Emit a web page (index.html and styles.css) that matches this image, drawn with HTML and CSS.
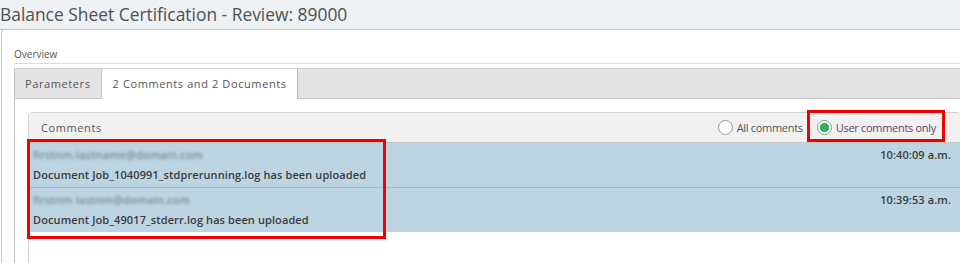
FILE: index.html
```html
<!DOCTYPE html>
<html lang="en">
<head>
    <meta charset="UTF-8">
    <title>Balance Sheet Certification - Review: 89000</title>
    <link rel="stylesheet" href="styles.css">
</head>
<body>
    <header class="page-title">Balance Sheet Certification - Review: 89000</header>

    <div class="card">
        <div class="overview">Overview</div>

        <div class="tabs">
            <div class="tab">Parameters</div>
            <div class="tab active">2 Comments and 2 Documents</div>
        </div>

        <div class="tab-body">
            <div class="panel">
                <div class="panel-header">
                    <span class="panel-title">Comments</span>
                    <div class="filters">
                        <label class="radio"><span class="dot"></span>All comments</label>
                        <label class="radio checked"><span class="dot"></span>User comments only</label>
                    </div>
                </div>

                <div class="comment">
                    <div class="comment-top">
                        <span class="author">firstnm.lastname@domain.com</span>
                        <span class="time">10:40:09 a.m.</span>
                    </div>
                    <div class="comment-text">Document Job_1040991_stdprerunning.log has been uploaded</div>
                </div>
                <div class="comment">
                    <div class="comment-top">
                        <span class="author">firstnm lastnm@domain.com</span>
                        <span class="time">10:39:53 a.m.</span>
                    </div>
                    <div class="comment-text">Document Job_49017_stderr.log has been uploaded</div>
                </div>
                <div class="panel-empty"></div>
            </div>
        </div>

        <!-- annotation boxes -->
        <div class="mark mark-rows"></div>
        <div class="mark mark-filter"></div>
    </div>
</body>
</html>
```

FILE: styles.css
```css
* {
    box-sizing: border-box;
    margin: 0;
    padding: 0;
}

body {
    font-family: 'Open Sans', 'Segoe UI', sans-serif;
    color: #555;
    background: #fff;
    width: 960px;
    height: 263px;
    overflow: hidden;
}

.page-title {
    height: 30px;
    line-height: 29px;
    font-size: 17.4px;
    color: #505050;
    background: #eef2f5;
    border-bottom: 1px solid #b3b3b3;
    white-space: nowrap;
}

.card {
    position: relative;
    width: 975px;
    height: 234px;
    margin-left: 1px;
    margin-top: -1px;
    border: 1px solid #c8c8c8;
    border-bottom: none;
    border-radius: 4px 0 0 0;
    padding-left: 12px;
    overflow: hidden;
}

.overview {
    height: 34px;
    padding-top: 17px;
    font-size: 10px;
    color: #555;
    border-bottom: 1px solid #dcdcdc;
    margin-bottom: 4px;
}

.tabs {
    display: flex;
    height: 31px;
    background: #e4e4e4;
    border-top: 1px solid #cfcfcf;
    border-bottom: 1px solid #c4c4c4;
    border-left: 1px solid #c4c4c4;
}

.tab {
    height: 29px;
    line-height: 30px;
    padding: 0 10px;
    font-size: 11px;
    letter-spacing: 0.6px;
    color: #555;
    border-right: 1px solid #c4c4c4;
}

.tab.active {
    background: #fff;
    height: 30px;
    padding: 0 10px 0 11px;
    border-right: 1px solid #b8b8b8;
}

.tab-body {
    border-left: 1px solid #c4c4c4;
    padding: 13px 13px 0 13px;
    height: 200px;
}

.panel {
    border: 1px solid #cfcfcf;
    border-radius: 5px 5px 0 0;
    overflow: hidden;
}

.panel-header {
    display: flex;
    justify-content: space-between;
    align-items: center;
    height: 30px;
    background: #f1f1f1;
    border-bottom: 1px solid #c6c6c6;
    padding: 0 25px 0 12px;
}

.panel-title {
    font-size: 11px;
    letter-spacing: 0.6px;
    color: #555;
}

.filters {
    display: flex;
    gap: 14px;
    font-size: 11px;
    letter-spacing: -0.3px;
}

.radio {
    display: flex;
    align-items: center;
    gap: 4px;
    color: #555;
}

.radio .dot {
    width: 15px;
    height: 15px;
    border: 1px solid #9a9a9a;
    border-radius: 50%;
    background: #fff;
}

.radio.checked {
    color: #6a3a6a;
}

.radio.checked .dot {
    border-color: #56b97a;
    background: radial-gradient(circle, #38b262 0 4.5px, #fff 5px);
}

.comment {
    background: #bdd5e3;
    padding: 2px 10px 2px 4px;
    font-size: 11px;
    font-weight: 600;
    letter-spacing: 0.1px;
    color: #3a3a3a;
}

.comment + .comment {
    border-top: 1px solid #a5b7c3;
}

.comment-top {
    display: flex;
    justify-content: space-between;
    height: 20px;
    line-height: 20px;
}

.author {
    color: #7b8894;
    filter: blur(1.4px);
}

.comment-text {
    height: 20px;
    line-height: 20px;
}

.panel-empty {
    height: 40px;
    background: #fff;
}

.mark {
    position: absolute;
    border: 3px solid #f00000;
}

.mark-rows {
    left: 25px;
    top: 109px;
    width: 359px;
    height: 100px;
}

.mark-filter {
    left: 805px;
    top: 80px;
    width: 138px;
    height: 32px;
}
```
